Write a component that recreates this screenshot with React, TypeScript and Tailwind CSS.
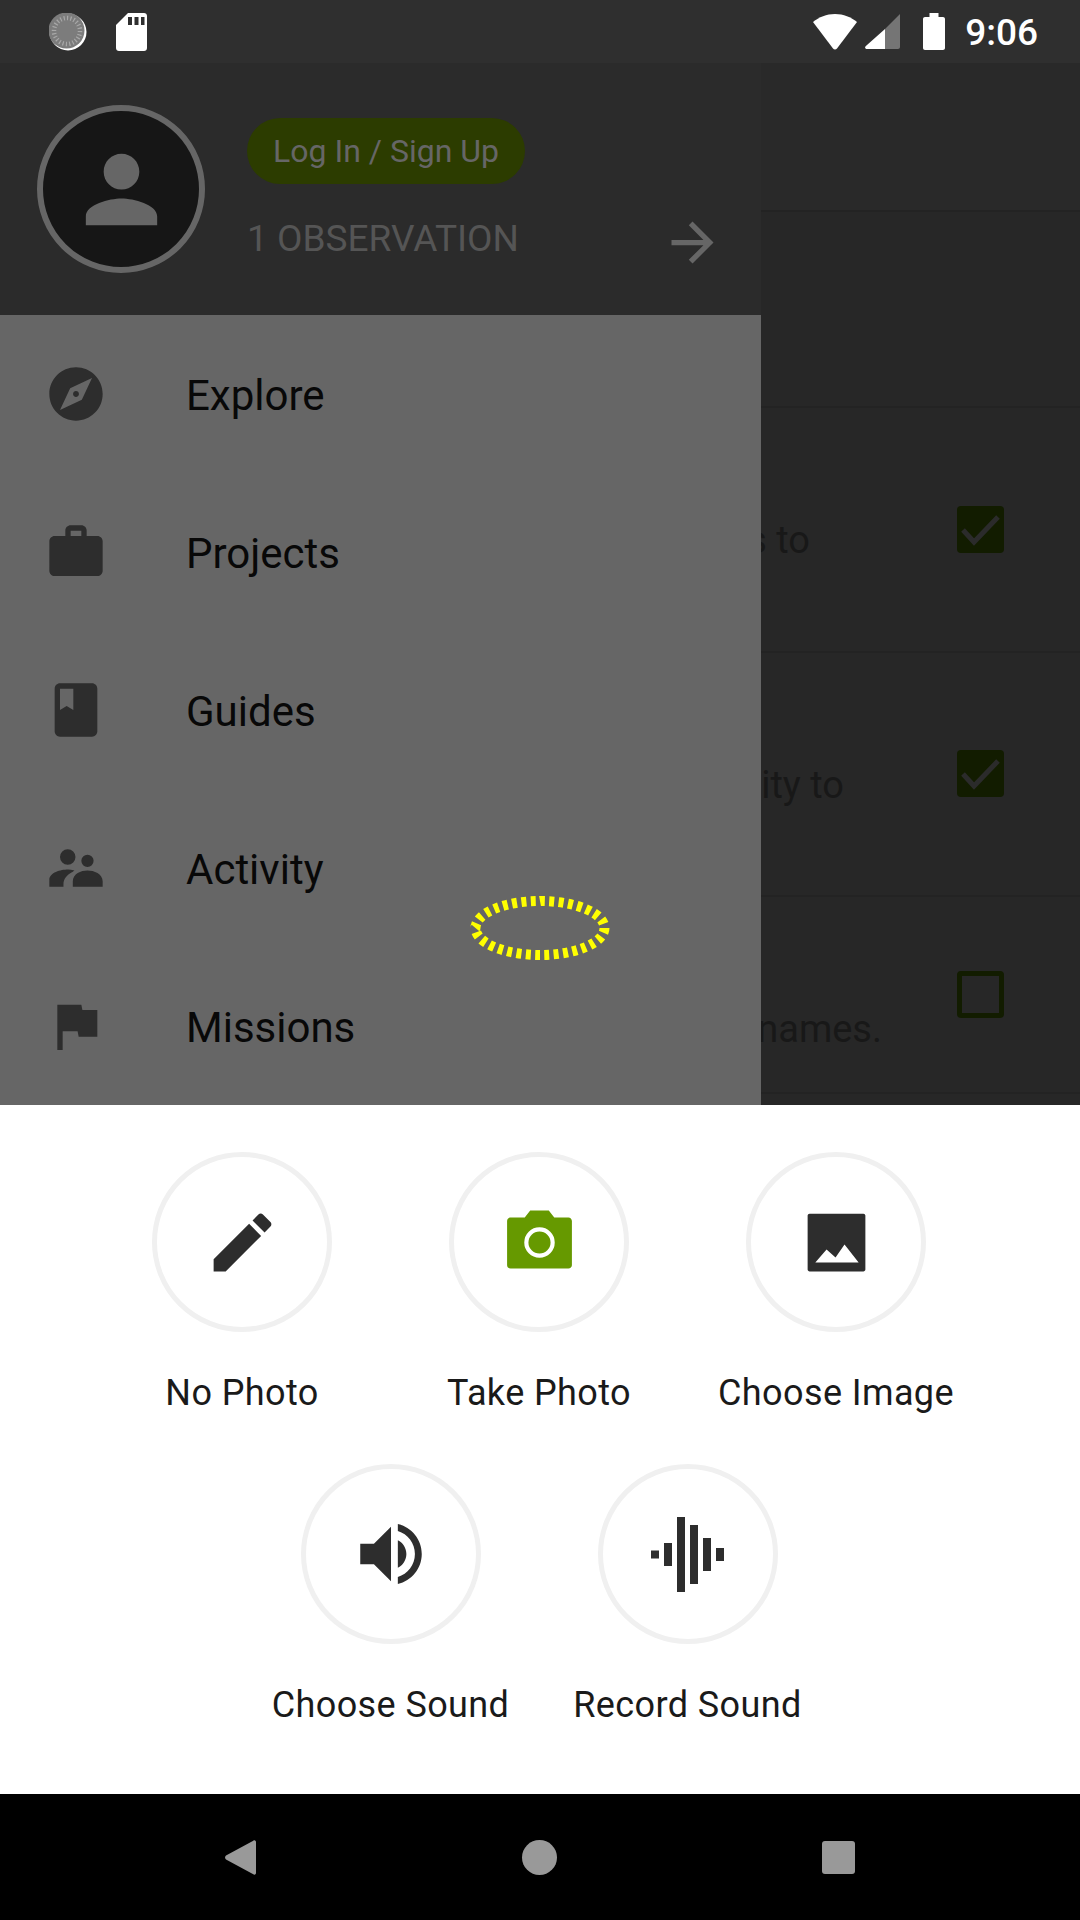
const iconColor = '#2d2d2d'

const menuItems = [
  { label: 'Explore', path: 'M12 10.9c-.61 0-1.1.49-1.1 1.1s.49 1.1 1.1 1.1c.61 0 1.1-.49 1.1-1.1s-.49-1.1-1.1-1.1zM12 2C6.48 2 2 6.48 2 12s4.48 10 10 10 10-4.48 10-10S17.52 2 12 2zm2.19 12.19L6 18l3.81-8.19L18 6l-3.81 8.19z' },
  { label: 'Projects', path: 'M20 6h-4V4c0-1.11-.89-2-2-2h-4c-1.11 0-2 .89-2 2v2H4c-1.11 0-1.99.89-1.99 2L2 19c0 1.11.89 2 2 2h16c1.11 0 2-.89 2-2V8c0-1.11-.89-2-2-2zm-6 0h-4V4h4v2z' },
  { label: 'Guides', path: 'M18 2H6c-1.1 0-2 .9-2 2v16c0 1.1.9 2 2 2h12c1.1 0 2-.9 2-2V4c0-1.1-.9-2-2-2zM6 4h5v8l-2.5-1.5L6 12V4z' },
  { label: 'Activity', path: 'M8.900 10.800a2.900 2.900 0 1 0 0-5.800 2.900 2.900 0 0 0 0 5.800zM16.300 11.600a2.300 2.300 0 1 0 0-4.600 2.300 2.300 0 0 0 0 4.600zM9 12.600C6.300 12.600 2 13.700 2 16.500V19h5.300v-1c0-1.800 1.200-3.500 3.500-4.600l.6-.5c-.9-.2-1.700-.3-2.400-.3zM16.300 12.900c-2.400 0-5.500 1.200-5.500 4.100V19H22v-2c0-2.900-3.300-4.100-5.700-4.100z' },
  { label: 'Missions', path: 'M14.400 6L14 4H5v17h2v-7h5.600l.4 2h7V6z' },
]

const rows = [
  { text: 's to', gap: 'mr-[147px]', height: 'h-[245px]', textTop: 'pt-[107px]', boxTop: 'mt-[98px]', checked: true },
  { text: 'ity to', gap: 'mr-[113px]', height: 'h-[244px]', textTop: 'pt-[107px]', boxTop: 'mt-[97px]', checked: true },
  { text: 'names.', gap: 'mr-[75px]', height: 'h-[197px]', textTop: 'pt-[107px]', boxTop: 'mt-[74px]', checked: false },
]

function MaterialIcon({ path, size, color }: { path: string; size: string; color: string }) {
  return (
    <svg viewBox="0 0 24 24" className={size} fill={color} fillRule="evenodd">
      <path d={path} />
    </svg>
  )
}

function StatusBar() {
  return (
    <div className="flex h-[63px] items-center bg-[#2f2f2f] text-white">
      <svg viewBox="0 0 38 38" className="ml-[49px] h-[38px] w-[38px]">
        <circle cx="19" cy="19" r="18.500" fill="#ffffff" />
        <circle cx="17.500" cy="17.500" r="18" fill="#7c7c7c" />
        <circle cx="18" cy="18" r="13" fill="none" stroke="#a8a8a8" strokeWidth="4.500" pathLength="24" strokeDasharray="0.35 0.65" />
      </svg>
      <svg viewBox="0 0 31 38" className="ml-[29px] h-[38px] w-[31px]">
        <path d="M12 0h16c1.700 0 3 1.300 3 3v32c0 1.700-1.300 3-3 3H3c-1.700 0-3-1.300-3-3V12z" fill="#ffffff" />
        <rect x="12" y="4" width="4" height="8" fill="#2f2f2f" />
        <rect x="18.500" y="4" width="4" height="8" fill="#2f2f2f" />
        <rect x="25" y="4" width="3.500" height="8" fill="#2f2f2f" />
      </svg>
      <div className="flex-1" />
      <svg viewBox="0 0 44 36" className="h-[36px] w-[44px]">
        <path d="M22 0C13.500 0 6 3 0 8l20 26.500c1 1.300 3 1.300 4 0L44 8C38 3 30.500 0 22 0z" fill="#ffffff" />
      </svg>
      <svg viewBox="0 0 35 35" className="ml-[8px] h-[35px] w-[35px]">
        <path d="M35 0v33c0 1.100-.9 2-2 2H20V15z" fill="#757575" />
        <path d="M20 15v20H2c-1.800 0-2.500-1.500-1.400-2.800z" fill="#ffffff" />
      </svg>
      <svg viewBox="0 0 22 37" className="ml-[23px] h-[37px] w-[22px]">
        <path d="M6.500 0h9v4H20c1.100 0 2 .9 2 2v29c0 1.100-.9 2-2 2H2c-1.100 0-2-.9-2-2V6c0-1.100.9-2 2-2h4.500z" fill="#ffffff" />
      </svg>
      <span className="mt-[2px] ml-[20px] mr-[42px] text-[37px] leading-none font-medium">9:06</span>
    </div>
  )
}

function BackgroundScreen() {
  return (
    <div className="flex flex-1 flex-col bg-[#272727] text-[38px] leading-[50px] text-[#181818]">
      <div className="h-[149px] border-b-2 border-[#232323] bg-[#292929]" />
      <div className="h-[196px] border-b-2 border-[#232323]" />
      {rows.map((row) => (
        <div key={row.text} className={`flex justify-end border-b-2 border-[#232323] ${row.height}`}>
          <p className={`${row.textTop} ${row.gap}`}>{row.text}</p>
          <div className={`mr-[76px] flex h-[47px] w-[47px] items-center justify-center rounded-[4px] ${row.boxTop} ${row.checked ? 'bg-[#121c00]' : 'border-[5px] border-[#121c00]'}`}>
            {row.checked && (
              <svg viewBox="0 0 47 47" className="h-[47px] w-[47px]">
                <path d="M6 24l11 12L41 11" fill="none" stroke="#2b2b2b" strokeWidth="5" />
              </svg>
            )}
          </div>
        </div>
      ))}
    </div>
  )
}

function Drawer() {
  return (
    <div className="absolute top-[63px] left-0 flex h-[1042px] w-[761px] flex-col">
      <div className="flex h-[252px] bg-[#2b2b2b]">
        <div className="mt-[42px] ml-[37px] flex h-[168px] w-[168px] items-center justify-center rounded-full border-[6px] border-[#666666] bg-[#161616]">
          <MaterialIcon
            path="M12 12c2.210 0 4-1.790 4-4s-1.790-4-4-4-4 1.790-4 4 1.790 4 4 4zm0 2c-2.670 0-8 1.340-8 4v2h16v-2c0-2.660-5.330-4-8-4z"
            size="h-[107px] w-[107px]"
            color="#666666"
          />
        </div>
        <div className="mt-[55px] ml-[42px] flex flex-1 flex-col">
          <div className="flex h-[66px] w-[278px] items-center justify-center rounded-full bg-[#2c3c00] text-[32px] text-[#666666]">
            Log In / Sign Up
          </div>
          <div className="mt-[21px] flex items-start justify-between pr-[37px]">
            <span className="text-[37px] leading-[67px] text-[#555555]">1 OBSERVATION</span>
            <div className="pt-[6px]">
              <MaterialIcon
                path="M12 4l-1.410 1.410L16.170 11H4v2h12.170l-5.580 5.590L12 20l8-8z"
                size="h-[63px] w-[63px]"
                color="#666666"
              />
            </div>
          </div>
        </div>
      </div>
      <div className="flex-1 bg-[#666666]">
        {menuItems.map((item) => (
          <div key={item.label} className="flex h-[158px] items-center pl-[44px]">
            <MaterialIcon path={item.path} size="h-[64px] w-[64px]" color={iconColor} />
            <span className="mt-[2px] ml-[78px] text-[42px] text-[#080808]">{item.label}</span>
          </div>
        ))}
      </div>
    </div>
  )
}

function SheetOption({ label, children }: { label: string; children: React.ReactNode }) {
  return (
    <div className="flex h-[312px] w-[297px] flex-col items-center">
      <div className="flex h-[180px] w-[180px] items-center justify-center rounded-full border-[5px] border-[#f0f0f0]">
        {children}
      </div>
      <span className="mt-[38px] text-[36px] leading-[46px] tracking-[0.4px] whitespace-nowrap text-[#1a1a1a]">{label}</span>
    </div>
  )
}

function BottomSheet() {
  return (
    <div className="absolute top-[1105px] left-0 flex h-[689px] w-full flex-wrap content-start justify-center bg-white pt-[47px] pr-[2px]">
      <SheetOption label="No Photo">
        <MaterialIcon
          path="M3 17.250V21h3.750L17.810 9.940l-3.750-3.750L3 17.250zM20.710 7.040c.39-.39.39-1.020 0-1.410l-2.340-2.340c-.39-.39-1.020-.39-1.410 0l-1.830 1.830 3.750 3.750 1.830-1.830z"
          size="h-[77px] w-[77px]"
          color={iconColor}
        />
      </SheetOption>
      <SheetOption label="Take Photo">
        <svg viewBox="0 0 24 24" className="h-[77px] w-[77px]">
          <path d="M9.100 2h5.800l1.700 2.200H21c.6 0 1.100.5 1.100 1.100v13.800c0 .6-.5 1-1.100 1H3c-.6 0-1.100-.4-1.100-1V5.300c0-.6.5-1.100 1.100-1.100h4.400z" fill="#669900" />
          <circle cx="12" cy="12" r="4.100" fill="none" stroke="#ffffff" strokeWidth="1.300" />
        </svg>
      </SheetOption>
      <SheetOption label="Choose Image">
        <MaterialIcon
          path="M3.600 3h16.800c.3 0 .6.3.6.6v16.800c0 .3-.3.6-.6.6H3.600c-.3 0-.6-.3-.6-.6V3.600c0-.3.3-.6.6-.6zM5.400 18.250L8.900 14.200l2.800 2.500 2.800-4.100 4.400 5.650z"
          size="h-[77px] w-[77px]"
          color={iconColor}
        />
      </SheetOption>
      <SheetOption label="Choose Sound">
        <MaterialIcon
          path="M3 9v6h4l5 5V4L7 9H3zm13.500 3c0-1.770-1.020-3.290-2.500-4.030v8.050c1.480-.73 2.500-2.250 2.500-4.020zM14 3.230v2.060c2.890.86 5 3.540 5 6.710s-2.110 5.850-5 6.710v2.060c4.010-.91 7-4.490 7-8.770s-2.990-7.860-7-8.770z"
          size="h-[82px] w-[82px]"
          color={iconColor}
        />
      </SheetOption>
      <SheetOption label="Record Sound">
        <svg viewBox="0 0 73 75" className="h-[75px] w-[73px]" fill={iconColor}>
          <rect x="0" y="33.500" width="8" height="8" />
          <rect x="13" y="26" width="8" height="23" />
          <rect x="26" y="0" width="8" height="75" />
          <rect x="39" y="8" width="8" height="59" />
          <rect x="52" y="21" width="8" height="33" />
          <rect x="65" y="31" width="8" height="13" />
        </svg>
      </SheetOption>
    </div>
  )
}

function NavBar() {
  return (
    <div className="flex h-[126px] items-center gap-[265px] bg-black pl-[225px]">
      <svg viewBox="0 0 31 35" className="h-[35px] w-[31px]">
        <path d="M30 0.500c.6.300 1 .8 1 1.500v31c0 .7-.4 1.200-1 1.500-.6.300-1.200.2-1.700-.2L1 19.500c-1.300-1-1.300-3 0-4L28.300.7c.5-.4 1.100-.5 1.700-.2z" fill="#999999" />
      </svg>
      <div className="ml-[1px] h-[35px] w-[35px] rounded-full bg-[#999999]" />
      <div className="h-[33px] w-[33px] rounded-[3px] bg-[#999999]" />
    </div>
  )
}

export default function App() {
  return (
    <div className="relative flex h-[1920px] w-[1080px] flex-col overflow-hidden bg-black font-['Roboto',sans-serif]">
      <StatusBar />
      <div className="relative flex flex-1 flex-col">
        <BackgroundScreen />
      </div>
      <Drawer />
      <BottomSheet />
      <div className="absolute top-[1794px] left-0 w-full">
        <NavBar />
      </div>
      {/* touch indicator */}
      <svg viewBox="0 0 140 66" className="absolute top-[895px] left-[470px] h-[66px] w-[140px]">
        <ellipse cx="70" cy="33" rx="64.500" ry="27" fill="none" stroke="#ffff00" strokeWidth="10" pathLength="32" strokeDasharray="0.53 0.47" />
      </svg>
    </div>
  )
}
